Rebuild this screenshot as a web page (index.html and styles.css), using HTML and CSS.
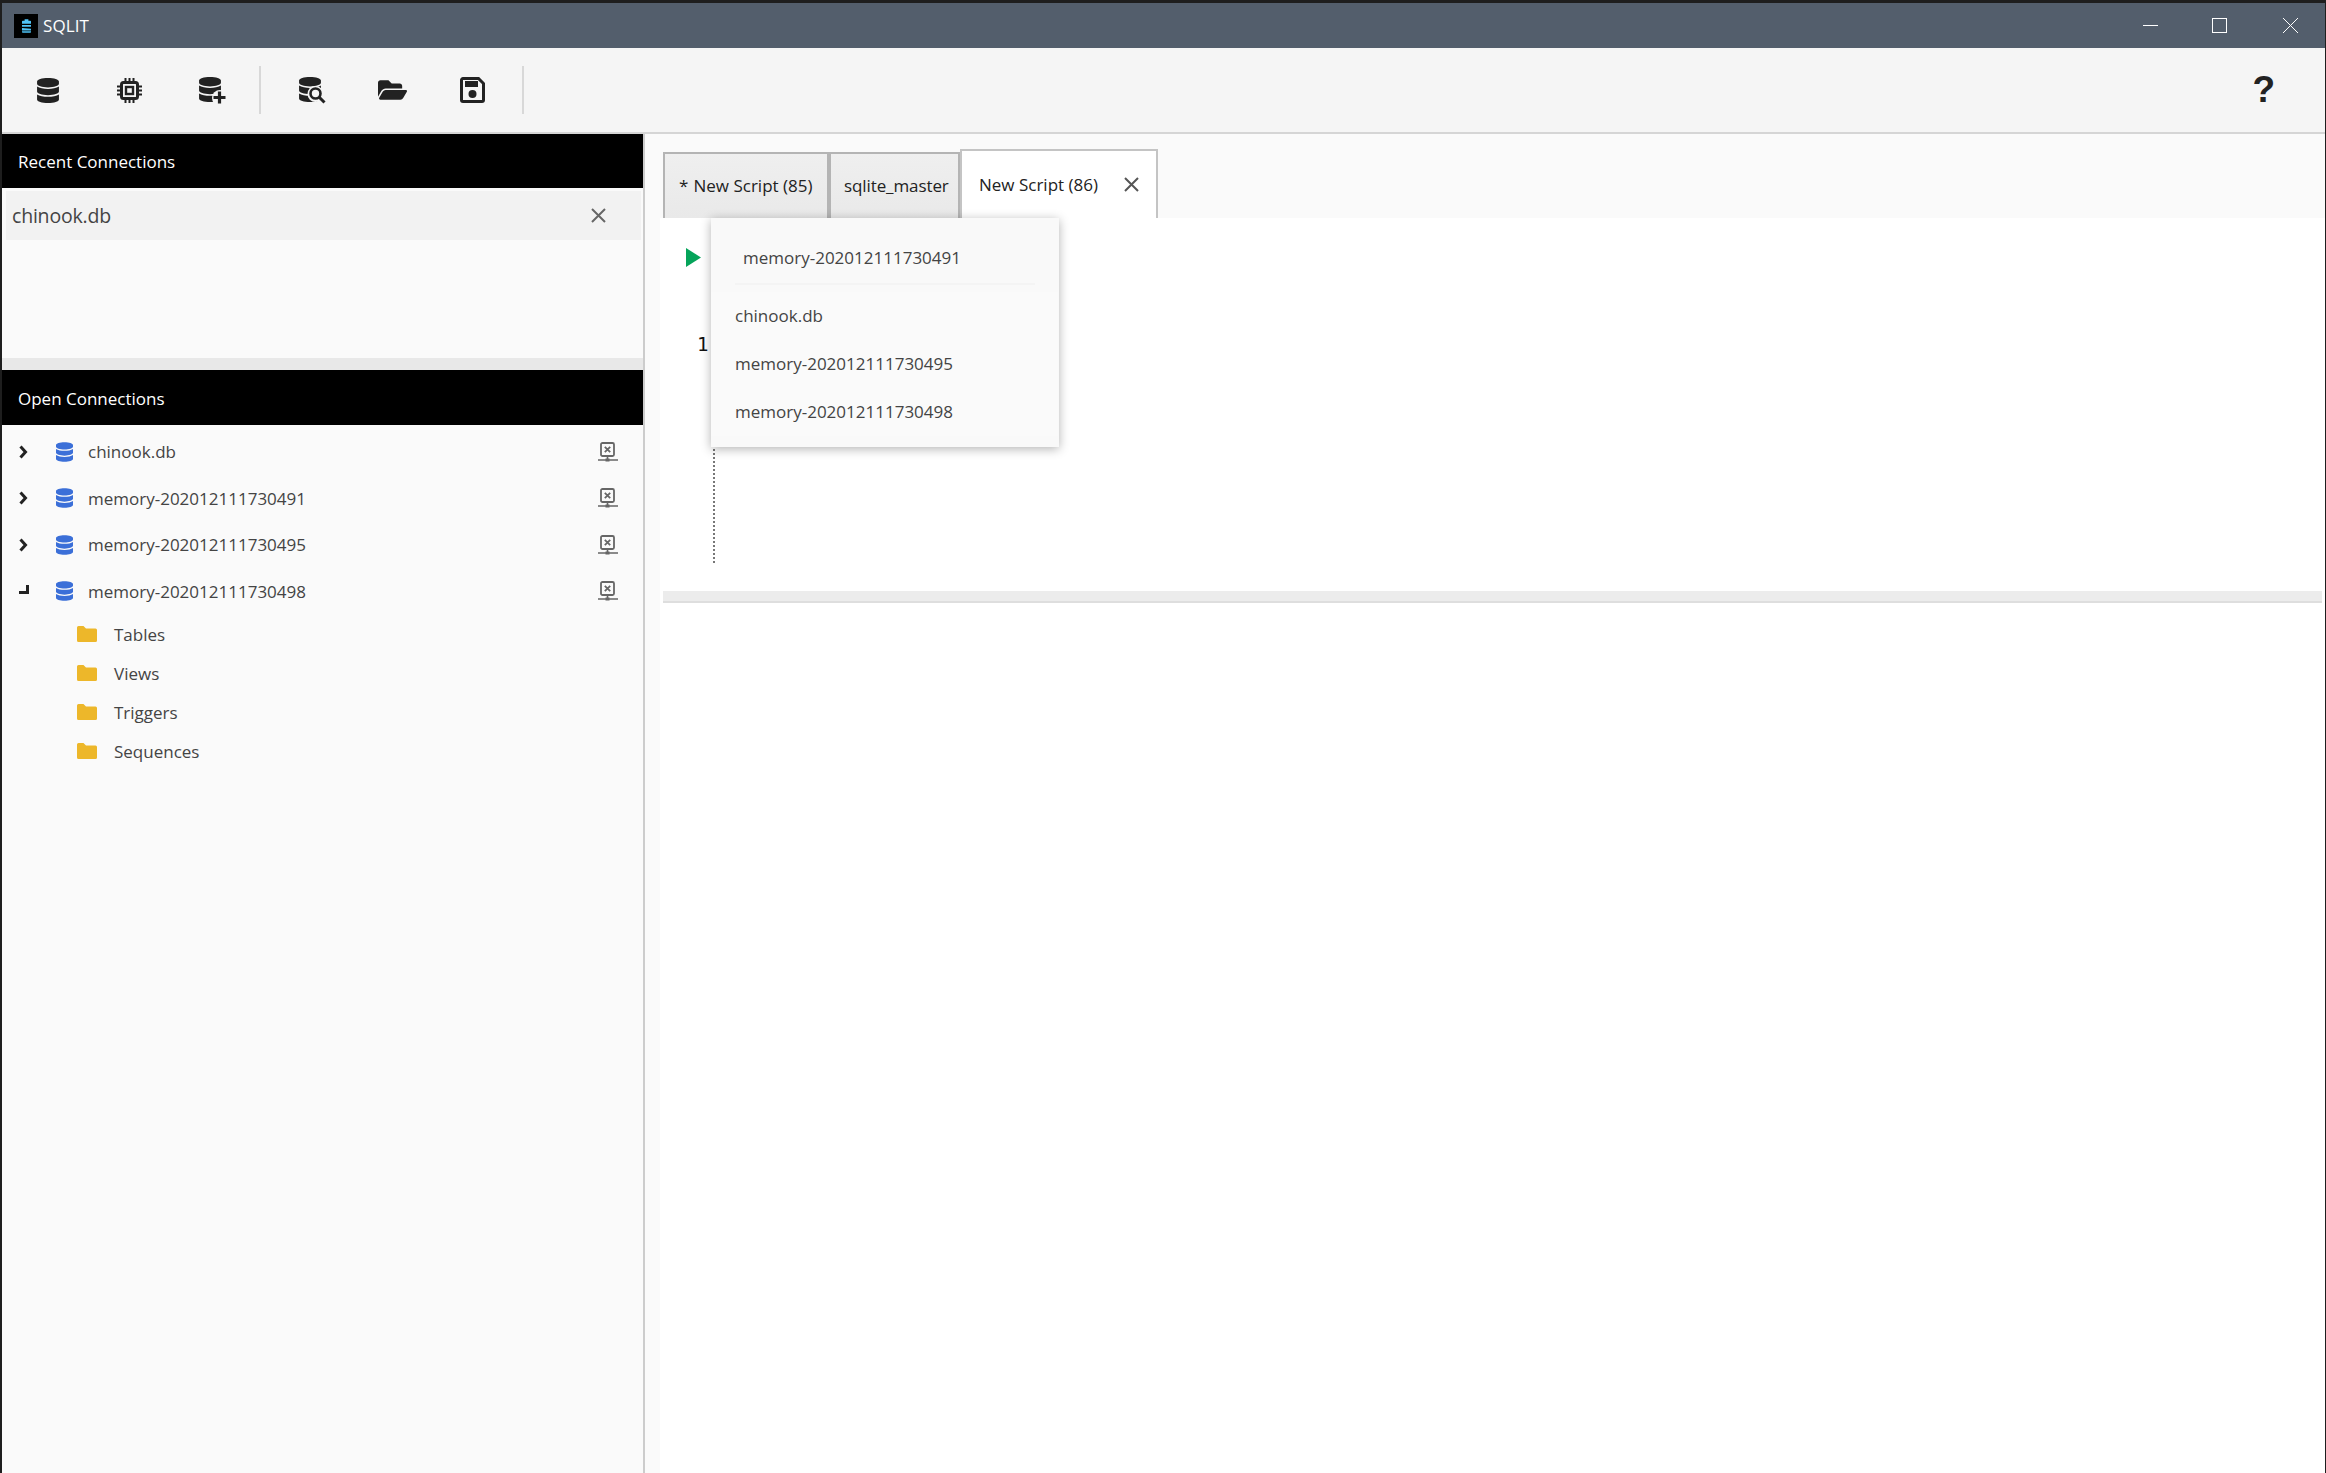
FILE: index.html
```html
<!DOCTYPE html>
<html lang="en">
<head>
    <meta charset="UTF-8">
    <title>SQLIT</title>
    <link rel="stylesheet" href="styles.css">
</head>
<body>
    <svg class="defs" width="0" height="0">
        <symbol id="db" viewBox="0 0 448 512">
            <path d="M448 73.143v45.714C448 159.143 347.667 192 224 192S0 159.143 0 118.857V73.143C0 32.857 100.333 0 224 0s224 32.857 224 73.143zM448 176v102.857C448 319.143 347.667 352 224 352S0 319.143 0 278.857V176c48.125 33.143 136.208 48.572 224 48.572S399.874 209.143 448 176zm0 160v102.857C448 479.143 347.667 512 224 512S0 479.143 0 438.857V336c48.125 33.143 136.208 48.572 224 48.572S399.874 369.143 448 336z"/>
        </symbol>
        <symbol id="netx" viewBox="0 0 20 20">
            <rect x="3" y="1" width="13" height="13" rx="1.5" fill="none" stroke="currentColor" stroke-width="1.8"/>
            <path d="M6.8 4.8l5.4 5.4M12.2 4.8l-5.4 5.4" fill="none" stroke="currentColor" stroke-width="1.8"/>
            <path d="M9.5 14v3M0 18h20" fill="none" stroke="currentColor" stroke-width="1.6"/>
            <rect x="7.5" y="16.5" width="4" height="3"/>
        </symbol>
        <symbol id="folder" viewBox="0 0 20 16">
            <path d="M0 1.5A1.5 1.5 0 0 1 1.5 0h5L9 2.5h9.5A1.5 1.5 0 0 1 20 4v10.5a1.5 1.5 0 0 1-1.5 1.5h-17A1.5 1.5 0 0 1 0 14.500z"/>
        </symbol>
        <symbol id="chevron" viewBox="0 0 9 14">
            <path d="M1.500 1.500L6.500 7l-5 5.500" fill="none" stroke="currentColor" stroke-width="3"/>
        </symbol>
    </svg>

    <div class="window">
        <header class="titlebar">
            <div class="logo">
                <svg width="9" height="14" viewBox="0 0 12 18"><path fill="#4fc3f7" d="M3.500 0h5v2H11a1 1 0 0 1 1 1v3H0V3a1 1 0 0 1 1-1h2.500zM0 7.500h12V10H0zM0 11.500l12 1V15H0zM0 16h12v1a1 1 0 0 1-1 1H1a1 1 0 0 1-1-1z"/></svg>
            </div>
            <span class="app-name">SQLIT</span>
            <div class="win-controls">
                <svg width="15" height="15" viewBox="0 0 15 15"><path d="M0 7.500h15" stroke="#fff" stroke-width="1"/></svg>
                <svg width="15" height="15" viewBox="0 0 15 15"><rect x=".5" y=".5" width="14" height="14" fill="none" stroke="#fff"/></svg>
                <svg width="15" height="15" viewBox="0 0 15 15"><path d="M0 0l15 15M15 0L0 15" stroke="#fff" stroke-width="1"/></svg>
            </div>
        </header>

        <nav class="toolbar">
            <button class="tool tool-db">
                <svg width="22" height="25"><use href="#db"/></svg>
            </button>
            <button class="tool tool-chip">
                <svg width="25" height="25" viewBox="0 0 25 25">
                    <rect x="4.500" y="4.500" width="16" height="16" rx="2" fill="none" stroke="#222" stroke-width="3"/>
                    <rect x="9" y="9" width="7" height="7" fill="none" stroke="#222" stroke-width="2.400"/>
                    <path d="M8.500 0v4M12.500 0v4M16.500 0v4M8.500 21v4M12.500 21v4M16.500 21v4M0 8.500h4M0 12.500h4M0 16.500h4M21 8.500h4M21 12.500h4M21 16.500h4" stroke="#222" stroke-width="2"/>
                </svg>
            </button>
            <button class="tool tool-add">
                <svg width="27" height="27" viewBox="0 0 27 27">
                    <mask id="add-cut"><rect width="27" height="27" fill="#fff"/><circle cx="21" cy="21" r="8" fill="#000"/></mask>
                    <use href="#db" width="22" height="25" mask="url(#add-cut)"/>
                    <path d="M20.500 14.500v12M14.500 20.500h12" stroke="#222" stroke-width="3.200"/>
                </svg>
            </button>
            <span class="sep sep-a"></span>
            <button class="tool tool-search">
                <svg width="27" height="27" viewBox="0 0 27 27">
                    <mask id="search-cut"><rect width="27" height="27" fill="#fff"/><circle cx="16.500" cy="17" r="8" fill="#000"/></mask>
                    <use href="#db" width="22" height="25" mask="url(#search-cut)"/>
                    <circle cx="16.500" cy="16.500" r="5" fill="none" stroke="#222" stroke-width="2.600"/>
                    <path d="M20 20l5.500 5.500" stroke="#222" stroke-width="3"/>
                </svg>
            </button>
            <button class="tool tool-open">
                <svg width="29" height="26" viewBox="0 0 576 512"><path fill="#222" d="M572.694 292.093L500.27 416.248A63.997 63.997 0 0 1 444.989 448H45.025c-18.523 0-30.064-20.093-20.731-36.093l72.424-124.155A64 64 0 0 1 152 256h399.964c18.523 0 30.064 20.093 20.73 36.093zM152 224h328v-48c0-26.51-21.49-48-48-48H272l-64-64H48C21.49 64 0 85.49 0 112v278.046l69.077-118.418C86.214 242.25 117.989 224 152 224z"/></svg>
            </button>
            <button class="tool tool-save">
                <svg width="25" height="26" viewBox="0 0 25 26">
                    <path d="M3 1.500h15.500l5 5V23a1.500 1.500 0 0 1-1.500 1.500H3A1.500 1.500 0 0 1 1.500 23V3A1.500 1.500 0 0 1 3 1.500z" fill="none" stroke="#222" stroke-width="3"/>
                    <rect x="5" y="4" width="13" height="6" fill="#222"/>
                    <circle cx="12.500" cy="17" r="4" fill="#222"/>
                </svg>
            </button>
            <span class="sep sep-b"></span>
            <span class="help">?</span>
        </nav>

        <main class="main">
            <aside class="sidebar">
                <h2 class="panel-head recent-head">Recent Connections</h2>
                <section class="recent">
                    <div class="recent-item">
                        <span>chinook.db</span>
                        <svg class="recent-close" width="15" height="15" viewBox="0 0 15 15"><path d="M1 1l13 13M14 1L1 14" stroke="#666" stroke-width="2"/></svg>
                    </div>
                </section>
                <div class="split"></div>
                <h2 class="panel-head open-head">Open Connections</h2>
                <ul class="tree">
                    <li class="conn">
                        <svg class="chev" width="9" height="14"><use href="#chevron"/></svg>
                        <svg class="conn-db" width="17" height="20"><use href="#db"/></svg>
                        <span class="conn-name">chinook.db</span>
                        <svg class="conn-x" width="20" height="20"><use href="#netx"/></svg>
                    </li>
                    <li class="conn">
                        <svg class="chev" width="9" height="14"><use href="#chevron"/></svg>
                        <svg class="conn-db" width="17" height="20"><use href="#db"/></svg>
                        <span class="conn-name">memory-202012111730491</span>
                        <svg class="conn-x" width="20" height="20"><use href="#netx"/></svg>
                    </li>
                    <li class="conn">
                        <svg class="chev" width="9" height="14"><use href="#chevron"/></svg>
                        <svg class="conn-db" width="17" height="20"><use href="#db"/></svg>
                        <span class="conn-name">memory-202012111730495</span>
                        <svg class="conn-x" width="20" height="20"><use href="#netx"/></svg>
                    </li>
                    <li class="conn">
                        <svg class="chev" width="10" height="14" viewBox="0 0 10 14"><path d="M0 8.500h8.500V1" fill="none" stroke="#222" stroke-width="3"/></svg>
                        <svg class="conn-db conn-db-open" width="17" height="20"><use href="#db"/></svg>
                        <span class="conn-name">memory-202012111730498</span>
                        <svg class="conn-x" width="20" height="20"><use href="#netx"/></svg>
                    </li>
                    <li class="child"><svg class="child-folder" width="20" height="16"><use href="#folder"/></svg><span>Tables</span></li>
                    <li class="child"><svg class="child-folder" width="20" height="16"><use href="#folder"/></svg><span>Views</span></li>
                    <li class="child"><svg class="child-folder" width="20" height="16"><use href="#folder"/></svg><span>Triggers</span></li>
                    <li class="child"><svg class="child-folder" width="20" height="16"><use href="#folder"/></svg><span>Sequences</span></li>
                </ul>
            </aside>

            <section class="work">
                <div class="tabs">
                    <div class="tab tab-script"><span class="star">*</span>New Script (85)</div>
                    <div class="tab tab-master">sqlite_master</div>
                    <div class="tab tab-active">
                        <span>New Script (86)</span>
                        <svg width="15" height="15" viewBox="0 0 15 15"><path d="M1 1l13 13M14 1L1 14" stroke="#555" stroke-width="2"/></svg>
                    </div>
                </div>
                <div class="panel">
                    <div class="editor">
                        <div class="run-row">
                            <svg width="15" height="19" viewBox="0 0 15 19"><path d="M0 0l15 9.500L0 19z" fill="#05a45a"/></svg>
                        </div>
                        <div class="code">
                            <span class="line-no">1</span>
                        </div>
                    </div>
                    <div class="hbar"></div>

                    <div class="combo">
                        <div class="combo-current">memory-202012111730491</div>
                        <ul class="combo-list">
                            <li>chinook.db</li>
                            <li>memory-202012111730495</li>
                            <li>memory-202012111730498</li>
                        </ul>
                    </div>
                </div>
            </section>
        </main>
    </div>
</body>
</html>
```

FILE: styles.css
```css
* {
    box-sizing: border-box;
}
html, body {
    margin: 0;
    height: 100%;
}
body {
    background-color: #1e1e1e;
    font-family: "Open Sans", "Noto Sans", sans-serif;
    font-size: 17px;
    color: #444;
    overflow: hidden;
    padding: 3px 1px 0 2px;
}
.defs {
    position: absolute;
}
.window {
    display: flex;
    flex-direction: column;
    height: 1470px;
    background-color: #fff;
}

/* title bar */
.titlebar {
    height: 45px;
    flex: none;
    display: flex;
    align-items: center;
    background-color: #535e6c;
    color: #fff;
    padding-left: 12px;
}
.logo {
    width: 24px;
    height: 24px;
    background-color: #000;
    display: flex;
    align-items: center;
    justify-content: center;
}
.app-name {
    margin-left: 5px;
    font-size: 17px;
    letter-spacing: 0.1px;
}
.win-controls {
    margin-left: auto;
    display: flex;
    gap: 54px;
    padding-right: 27px;
}
.win-controls svg:nth-child(2) {
    margin-right: 2px;
}

/* toolbar */
.toolbar {
    height: 86px;
    flex: none;
    display: flex;
    align-items: center;
    background-color: #f5f5f5;
    border-bottom: 2px solid #d5d5d5;
    padding-left: 35px;
}
.tool {
    border: none;
    background: none;
    padding: 0;
    display: flex;
    color: #222;
    fill: #222;
}
.tool-chip {
    margin-left: 58px;
}
.tool-add {
    margin-left: 57px;
}
.tool-search {
    margin-left: 38px;
}
.tool-open {
    margin-left: 52px;
}
.tool-save {
    margin-left: 53px;
}
.sep {
    width: 2px;
    height: 48px;
    background-color: #d8d8d8;
}
.sep-a {
    margin-left: 33px;
}
.sep-b {
    margin-left: 37px;
}
.help {
    margin-left: auto;
    margin-right: 50px;
    font-family: "Liberation Sans", Arial, sans-serif;
    font-weight: bold;
    font-size: 37px;
    line-height: 40px;
    color: #222;
}

/* left side */
.main {
    flex: 1;
    display: flex;
    min-height: 0;
}
.sidebar {
    width: 643px;
    flex: none;
    display: flex;
    flex-direction: column;
    background-color: #fafafa;
    border-right: 2px solid #ccc;
}
.panel-head {
    margin: 0;
    background-color: #000;
    color: #fff;
    font-size: 17px;
    font-weight: normal;
    display: flex;
    align-items: center;
    padding-left: 16px;
    flex: none;
}
.recent-head {
    height: 54px;
}
.open-head {
    height: 55px;
    padding-top: 1px;
}
.recent {
    height: 170px;
    flex: none;
    padding: 3px 2px 0 4px;
}
.recent-item {
    height: 49px;
    background-color: #f2f2f2;
    display: flex;
    align-items: center;
    padding: 0 35px 0 6px;
    font-size: 19.500px;
    color: #444;
    letter-spacing: -0.2px;
}
.recent-close {
    margin-left: auto;
}
.split {
    height: 12px;
    flex: none;
    background-color: #e8e8e8;
}
.tree {
    list-style: none;
    margin: 0;
    padding: 3.500px 0 0;
}
.conn {
    height: 46.500px;
    display: flex;
    align-items: center;
    padding-left: 17px;
}
.chev {
    color: #222;
}
.conn-db {
    margin-left: 28px;
    fill: #3b6fd8;
}
.conn-db-open {
    margin-left: 27px;
}
.conn-name {
    margin-left: 15px;
}
.conn-x {
    margin-left: auto;
    margin-right: 25px;
    color: #666;
    fill: #666;
}
.child {
    height: 39px;
    display: flex;
    align-items: center;
    padding-left: 75px;
}
.child-folder {
    fill: #edb72a;
}
.child span {
    margin-left: 17px;
}

/* tabs */
.work {
    flex: 1;
    min-width: 0;
    display: flex;
    flex-direction: column;
    background-color: #fafafa;
}
.tabs {
    height: 84px;
    flex: none;
    display: flex;
    align-items: flex-end;
    padding-left: 18px;
}
.tab {
    height: 66px;
    display: flex;
    align-items: center;
    color: #222;
    background: linear-gradient(#efefef, #e9e9e9);
    border: 2px solid #b4b4b4;
    border-bottom: none;
    padding-bottom: 2px;
}
.tab-script {
    width: 166px;
    padding-left: 14px;
}
.star {
    width: 14.500px;
}
.tab-master {
    width: 131px;
    padding-left: 13px;
    letter-spacing: -0.1px;
}
.tab-active {
    width: 198px;
    height: 69px;
    background: #fff;
    padding: 0 17px 0 17px;
    border-color: #c4c4c4;
    justify-content: space-between;
}

/* editor */
.panel {
    flex: 1;
    min-height: 0;
    position: relative;
    margin-left: 15px;
    background-color: #fff;
    display: flex;
    flex-direction: column;
}
.editor {
    height: 373px;
    flex: none;
    padding-left: 26px;
}
.run-row {
    height: 30px;
    padding-top: 30px;
    display: flex;
}
.code {
    margin-top: 75px;
    padding-left: 11px;
    height: 234px;
    display: flex;
}
.line-no {
    font-family: "DejaVu Sans Mono", monospace;
    font-size: 19px;
    line-height: 30px;
    color: #111;
    width: 18px;
    height: 234px;
    border-right: 2px dotted #777;
    margin-top: 6px;
}
.hbar {
    margin-left: 3px;
    margin-right: 3px;
    height: 12px;
    flex: none;
    background-color: #ececec;
    border-bottom: 2px solid #dedede;
}

/* connection picker */
.combo {
    position: absolute;
    left: 51px;
    top: 0;
    width: 348px;
    height: 229px;
    background-color: #f9f9f9;
    box-shadow: 0 2px 10px rgba(0, 0, 0, 0.3);
}
.combo-current {
    margin: 0 24px;
    padding: 14px 0 0 8px;
    line-height: 52px;
    height: 67px;
    border-bottom: 2px solid #f4f4f4;
    color: #444;
}
.combo-list {
    list-style: none;
    margin: 7px 1px 0 0;
    padding: 0;
    background-color: #fafafa;
    height: 144px;
}
.combo-list li {
    height: 48px;
    line-height: 48px;
    padding-left: 24px;
}
```
